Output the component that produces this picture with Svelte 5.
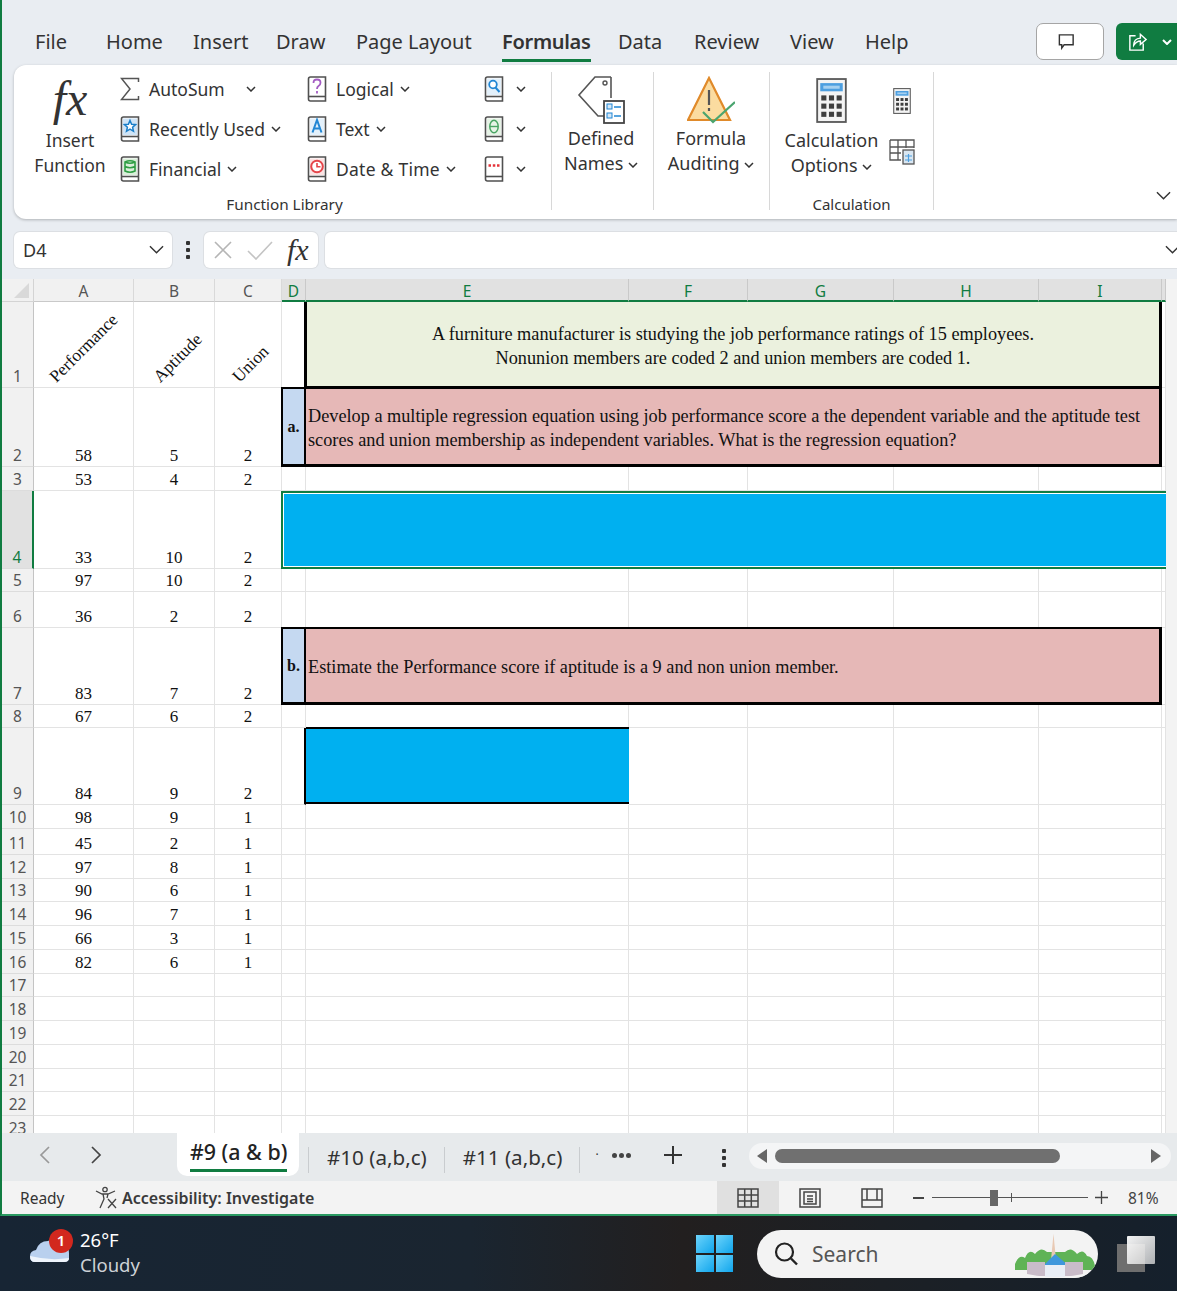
<script>
  const tabs = [
    { name: "File", width: 71 }, { name: "Home", width: 87 }, { name: "Insert", width: 83 },
    { name: "Draw", width: 80 }, { name: "Page Layout", width: 146 }, { name: "Formulas", width: 116 },
    { name: "Data", width: 76 }, { name: "Review", width: 96 }, { name: "View", width: 75 }, { name: "Help", width: 60 }
  ];
  const columns = ["A", "B", "C", "D", "E", "F", "G", "H", "I", ""];
  const rowHeights = [23, 86, 79, 24, 78, 23, 36, 77, 23, 77, 24, 26, 24, 23, 24, 24, 24, 23, 24, 24, 24, 23, 24, 24];
  const values = {
    2: [58, 5, 2], 3: [53, 4, 2], 4: [33, 10, 2], 5: [97, 10, 2], 6: [36, 2, 2],
    7: [83, 7, 2], 8: [67, 6, 2], 9: [84, 9, 2], 10: [98, 9, 1], 11: [45, 2, 1],
    12: [97, 8, 1], 13: [90, 6, 1], 14: [96, 7, 1], 15: [66, 3, 1], 16: [82, 6, 1]
  };
  const rows = Array.from({ length: 23 }, (_, i) => i + 1);
  const gridRows = rowHeights.map((h) => h + "px").join(" ");
</script>

{#snippet chevron()}
  <svg class="chev" viewBox="0 0 10 6"><path d="M1 1l4 4 4-4" /></svg>
{/snippet}

{#snippet book(kind)}
  <svg class="book" viewBox="0 0 20 26">
    <path d="M1.5 3Q1.5 1 3.5 1H18.5V25H3.5Q1.5 25 1.5 23Z" fill="#fff" stroke="#505050" stroke-width="1.6" />
    <path d="M1.5 20.5H18.5" stroke="#505050" stroke-width="1.6" />
    {#if kind === "star"}
      <rect x="3" y="2.500" width="14" height="16.500" fill="#cfe4f6" />
      <path d="M10 4.500l1.600 3.800 4 .3-3 2.700.9 4-3.500-2.100-3.500 2.100.9-4-3-2.700 4-.3z" fill="#fff" stroke="#1b7fc9" stroke-width="1.500" />
    {:else if kind === "db"}
      <rect x="3" y="2.500" width="14" height="16.500" fill="#d9eed9" />
      <path d="M5 6q5-2.500 10 0v9q-5 2.500-10 0zM5 6q5 2.500 10 0M5 10.500q5 2.500 10 0" fill="none" stroke="#2f9e44" stroke-width="1.600" />
    {:else if kind === "q"}
      <path d="M6.500 7q0-3.500 3.500-3.500t3.500 3.200q0 2-2 3.300-1.500 1-1.500 3M10 15v2.500" fill="none" stroke="#a45cc4" stroke-width="1.800" />
    {:else if kind === "a"}
      <rect x="3" y="2.500" width="14" height="16.500" fill="#e3f0fa" />
      <path d="M5.500 16.500L10 4l4.500 12.500M7 12.500h6" fill="none" stroke="#2186d4" stroke-width="2" />
    {:else if kind === "clock"}
      <rect x="3" y="2.500" width="14" height="16.500" fill="#fbe3e3" />
      <circle cx="10" cy="10.500" r="5.800" fill="#fff" stroke="#e5454a" stroke-width="2" />
      <path d="M10 7v3.800h3.500" fill="none" stroke="#e5454a" stroke-width="1.600" />
    {:else if kind === "find"}
      <rect x="3" y="2.500" width="14" height="16.500" fill="#e3f0fa" />
      <circle cx="9" cy="8.500" r="3.800" fill="#fff" stroke="#2186d4" stroke-width="1.800" />
      <path d="M11.500 11.500l4 4.500" stroke="#2186d4" stroke-width="2" />
    {:else if kind === "theta"}
      <rect x="3" y="2.500" width="14" height="16.500" fill="#e6f3e6" />
      <ellipse cx="10" cy="10.500" rx="4.200" ry="6.300" fill="none" stroke="#4aa564" stroke-width="1.500" />
      <path d="M6 10.500h8" stroke="#4aa564" stroke-width="1.400" />
    {:else}
      <path d="M4.500 9.500h2.500M8.800 9.500h2.500M13 9.500h2.500" stroke="#e5343a" stroke-width="2.400" />
    {/if}
  </svg>
{/snippet}

{#snippet calculator(cls)}
  <svg class={cls} viewBox="0 0 30 44">
    <rect x="1" y="1" width="28" height="42" fill="#f4f4f4" stroke="#5a5a5a" stroke-width="1.800" />
    <rect x="4" y="5" width="22" height="8" fill="#4d9fe0" />
    <rect x="7" y="7.500" width="16" height="3" fill="#a5d0f0" />
    {#each [17, 25, 33] as y}
      {#each [5, 12.500, 20] as x}
        <rect {x} {y} width="5" height="5" fill="#3f3f3f" />
      {/each}
    {/each}
  </svg>
{/snippet}

<div class="window">
  <header class="topbar">
    <nav class="tabs">
      {#each tabs as tab}
        <div class="tab" style="width: {tab.width}px"><span class:active={tab.name === "Formulas"}>{tab.name}</span></div>
      {/each}
    </nav>
    <button class="comment" aria-label="Comments">
      <svg viewBox="0 0 20 20" width="19" height="19"><path d="M2.500 3H17V13.500H7.500L5 17V13.500H2.500Z" fill="none" stroke="#333" stroke-width="1.500" /></svg>
    </button>
    <button class="share" aria-label="Share">
      <svg viewBox="0 0 22 22" width="21" height="21"><path d="M9 5H3V20H17V13M7 15Q7 8 14 7.500V3.500L20 9L14 14V10.500Q10 10.500 7 15Z" fill="none" stroke="#fff" stroke-width="1.500" /></svg>
      <svg class="chev white" viewBox="0 0 10 6"><path d="M1 1l4 4 4-4" /></svg>
    </button>
  </header>

  <section class="ribbon">
    <div class="group library">
      <div class="group-body">
        <div class="big insert">
          <span class="fx-big">fx</span>
          <span>Insert</span>
          <span>Function</span>
        </div>
        <div class="list col-one">
          <div class="item">
            <svg class="book" viewBox="0 0 20 24"><path d="M18.500 5V1.500H1.500L10 12 1.500 22.500H18.500V19" fill="none" stroke="#555" stroke-width="1.500" /></svg>
            <span class="auto-sum">AutoSum</span>{@render chevron()}
          </div>
          <div class="item">{@render book("star")}<span>Recently Used</span>{@render chevron()}</div>
          <div class="item">{@render book("db")}<span>Financial</span>{@render chevron()}</div>
        </div>
        <div class="list col-two">
          <div class="item">{@render book("q")}<span>Logical</span>{@render chevron()}</div>
          <div class="item">{@render book("a")}<span>Text</span>{@render chevron()}</div>
          <div class="item">{@render book("clock")}<span class="date">Date &amp; Time</span>{@render chevron()}</div>
        </div>
        <div class="list col-three">
          <div class="item">{@render book("find")}{@render chevron()}</div>
          <div class="item">{@render book("theta")}{@render chevron()}</div>
          <div class="item">{@render book("more")}{@render chevron()}</div>
        </div>
      </div>
      <div class="group-label library-label">Function Library</div>
    </div>

    <div class="group names">
      <div class="big short">
        <svg class="big-icon" viewBox="0 0 48 48" width="48" height="48">
          <path d="M34 1H18L2 19L21 40H30V31M34 1V22" fill="#fff" stroke="#555" stroke-width="1.600" />
          <circle cx="28" cy="7" r="2" fill="#fff" stroke="#555" stroke-width="1.400" />
          <rect x="27" y="25" width="20" height="22" fill="#fff" stroke="#444" stroke-width="1.800" />
          <rect x="30" y="28" width="5" height="5" fill="#d5e8f7" stroke="#2186d4" />
          <rect x="30" y="37" width="5" height="5" fill="#d5e8f7" stroke="#2186d4" />
          <path d="M37 31h7M37 40h7" stroke="#2186d4" stroke-width="1.600" />
        </svg>
        <span>Defined</span>
        <span>Names {@render chevron()}</span>
      </div>
    </div>

    <div class="group audit">
      <div class="big short">
        <svg class="big-icon" viewBox="0 0 48 48" width="48" height="48">
          <path d="M22 2L1 44H43Z" fill="#fbdca0" stroke="#e08a2a" stroke-width="2.200" />
          <path d="M22 14V29M22 32V35" stroke="#555" stroke-width="2.200" />
          <path d="M16 36L26 46L48 26" fill="none" stroke="#4aa56f" stroke-width="2.200" />
        </svg>
        <span>Formula</span>
        <span>Auditing {@render chevron()}</span>
      </div>
    </div>

    <div class="group calc">
      <div class="group-body">
        <div class="big calc-options">
          {@render calculator("calc-big")}
          <span>Calculation</span>
          <span>Options {@render chevron()}</span>
        </div>
        <div class="calc-side">
          {@render calculator("calc-small")}
          <svg viewBox="0 0 26 26" width="26" height="26">
            <path d="M1 1H25V9M1 1V21H12M1 8H25M1 14H12M9 1V21M17 1V9" fill="#fff" stroke="#555" stroke-width="1.300" />
            <rect x="14" y="11" width="11" height="14" fill="#d9e6f1" stroke="#555" stroke-width="1.300" />
            <path d="M16 17h7M16 21h7M19.500 15v8" stroke="#4d9fe0" stroke-width="1.200" />
          </svg>
        </div>
      </div>
      <div class="group-label">Calculation</div>
    </div>

    <svg class="collapse" viewBox="0 0 16 10"><path d="M1 1l7 7 7-7" /></svg>
  </section>

  <div class="formula-bar">
    <div class="name-box"><span>D4</span><svg class="fb-chev" viewBox="0 0 16 10"><path d="M1 1l7 7 7-7" /></svg></div>
    <div class="kebab bar-kebab"><i></i><i></i><i></i></div>
    <div class="fx-box">
      <svg viewBox="0 0 20 20" width="20" height="20"><path d="M2 2l16 16M18 2L2 18" stroke="#b5b5b5" stroke-width="1.600" /></svg>
      <svg viewBox="0 0 26 20" width="26" height="20"><path d="M1 11l8 8L25 2" fill="none" stroke="#c4c4c4" stroke-width="1.600" /></svg>
      <span class="fx-small">fx</span>
    </div>
    <div class="formula-input"><svg class="fb-chev" viewBox="0 0 16 10"><path d="M1 1l7 7 7-7" /></svg></div>
  </div>

  <div class="sheet" style="grid-template-rows: {gridRows}">
    <div class="corner"><span></span></div>
    {#each columns as col, i}
      <div class="col-head" class:selected={i >= 3}>{col}</div>
    {/each}

    {#each rows as n}
      <div class="row-head" class:selected={n === 4}>{n}</div>
      {#if n === 1}
        <div class="cell angled a-col"><span>Performance</span></div>
        <div class="cell angled b-col"><span>Aptitude</span></div>
        <div class="cell angled c-col"><span>Union</span></div>
        <div class="cell box-edge"></div>
        <div class="cell merged intro">
          <p>A furniture manufacturer is studying the job performance ratings of 15 employees.</p>
          <p>Nonunion members are coded 2 and union members are coded 1.</p>
        </div>
        <div class="cell"></div>
      {:else}
        {#each [0, 1, 2] as c}
          <div class="cell num">{values[n] ? values[n][c] : ""}</div>
        {/each}
        {#if n === 2}
          <div class="cell tag">a.</div>
          <div class="cell merged question">
            <p>Develop a multiple regression equation using job performance score a the dependent variable and the aptitude test</p>
            <p>scores and union membership as independent variables. What is the regression equation?</p>
          </div>
          <div class="cell"></div>
        {:else if n === 4}
          <div class="cell answer-row"></div>
        {:else if n === 7}
          <div class="cell tag">b.</div>
          <div class="cell merged question"><p>Estimate the Performance score if aptitude is a 9 and non union member.</p></div>
          <div class="cell"></div>
        {:else if n === 9}
          <div class="cell box-edge"></div>
          <div class="answer-box"></div>
          {#each [0, 1, 2, 3, 4] as _}<div class="cell"></div>{/each}
        {:else}
          {#each [0, 1, 2, 3, 4, 5, 6] as _}<div class="cell"></div>{/each}
        {/if}
      {/if}
    {/each}
  </div>

  <div class="sheet-tabs">
    <svg class="nav prev" viewBox="0 0 12 20"><path d="M10 2L2 10l8 8" /></svg>
    <svg class="nav next" viewBox="0 0 12 20"><path d="M2 2l8 8-8 8" /></svg>
    <div class="sheet-tab current"><span>#9 (a &amp; b)</span></div>
    <i class="sep"></i>
    <div class="sheet-tab">#10 (a,b,c)</div>
    <div class="sheet-tab">#11 (a,b,c)</div>
    <span class="cut">·</span>
    <div class="more"><i></i><i></i><i></i></div>
    <svg class="add" viewBox="0 0 20 20"><path d="M10 1v18M1 10h18" /></svg>
    <div class="kebab tab-kebab"><i></i><i></i><i></i></div>
    <div class="scroll">
      <svg viewBox="0 0 10 14" width="10" height="14"><path d="M10 0V14L0 7Z" fill="#666" /></svg>
      <div class="thumb"></div>
      <svg viewBox="0 0 10 14" width="10" height="14"><path d="M0 0V14L10 7Z" fill="#666" /></svg>
    </div>
  </div>

  <footer class="status">
    <span class="ready">Ready</span>
    <svg class="a11y" viewBox="0 0 24 24" width="24" height="24">
      <circle cx="11" cy="3.500" r="2.200" fill="none" stroke="#444" stroke-width="1.300" />
      <path d="M2 5L8 8H14L21 5M9 8L10 13 6 22M14 8L13 12M14 13L22 22M22 13L14 22" fill="none" stroke="#444" stroke-width="1.300" />
    </svg>
    <strong>Accessibility: Investigate</strong>
    <div class="view-btn on">
      <svg viewBox="0 0 22 20" width="22" height="20"><path d="M1 1H21V19H1ZM1 7H21M1 13H21M7.700 1V19M14.300 1V19" fill="none" stroke="#444" stroke-width="1.500" /></svg>
    </div>
    <div class="view-btn">
      <svg viewBox="0 0 22 20" width="22" height="20"><path d="M1 1H21V19H1ZM5 4H17V16H5ZM8 8H14M8 11H14M8 13.500H14" fill="none" stroke="#444" stroke-width="1.500" /></svg>
    </div>
    <div class="view-btn">
      <svg viewBox="0 0 22 20" width="22" height="20"><path d="M1 1H21V19H1ZM1 12H16V1M6 12V1M16 12H21" fill="none" stroke="#444" stroke-width="1.500" /></svg>
    </div>
    <span class="minus"></span>
    <div class="slider"><i class="tick"></i><i class="knob"></i></div>
    <svg class="plus" viewBox="0 0 12 12" width="13" height="13"><path d="M6 0v12M0 6h12" stroke="#444" stroke-width="1.200" /></svg>
    <span class="percent">81%</span>
  </footer>
</div>

<div class="taskbar">
  <div class="weather">
    <svg class="cloud" viewBox="0 0 40 28" width="40" height="28">
      <path d="M5 27Q0 27 0 21 0 16 6 15 9 6 18 6 25 1 32 6 39 9 39 18V23Q39 27 34 27Z" fill="#b9d0ee" />
      <path d="M0 21Q0 27 5 27H34Q39 27 39 23 20 26 0 21Z" fill="#eef4fb" />
    </svg>
    <span class="badge">1</span>
    <div class="weather-text"><span>26°F</span><span class="dim">Cloudy</span></div>
  </div>
  <div class="start">
    <i></i><i></i><i></i><i></i>
  </div>
  <div class="search">
    <svg viewBox="0 0 26 26" width="26" height="26"><circle cx="11.500" cy="11" r="8.500" fill="none" stroke="#222" stroke-width="2.200" /><path d="M18 17.500l6 6" stroke="#222" stroke-width="2.400" /></svg>
    <span>Search</span>
    <svg class="scene" viewBox="0 0 80 48" width="80" height="48">
      <path d="M0 34Q4 24 10 28 14 18 20 24 26 16 32 22H50Q56 16 62 24 68 18 72 26 78 26 80 36V40H0Z" fill="#5fb356" />
      <path d="M36 30L38.500 4 41 30Z" fill="#e8c9b4" />
      <path d="M28 36L40 24 54 36Z" fill="#3f97dc" />
      <rect x="12" y="32" width="18" height="14" fill="#c9bcc9" />
      <rect x="50" y="32" width="18" height="14" fill="#c9bcc9" />
      <rect x="30" y="35" width="20" height="13" fill="#e9eef6" />
      <path d="M4 42Q40 52 76 42V48H4Z" fill="#f3f3f3" />
    </svg>
  </div>
  <div class="task-view"><i class="back"></i><i class="front"></i></div>
</div>

<style>
  :global(body) {
    margin: 0;
    background: #e9edf2;
  }
  :global(#app) {
    width: 1177px;
    height: 1291px;
    overflow: hidden;
  }
  p {
    margin: 0;
  }
  button {
    padding: 0;
    cursor: pointer;
  }
  .window {
    height: 1216px;
    box-sizing: border-box;
    border-left: 2px solid #107c41;
    border-bottom: 2px solid #2a9a62;
    background: #e9edf2;
    display: flex;
    flex-direction: column;
    font-family: "Noto Sans", sans-serif;
    color: #333;
    overflow: hidden;
  }

  .topbar {
    height: 65px;
    flex: none;
    display: flex;
    align-items: flex-start;
  }
  .tabs {
    display: flex;
    padding: 27px 0 0 33px;
    font-size: 20px;
    line-height: 30px;
  }
  .tab {
    white-space: nowrap;
    flex: none;
  }
  .tab span {
    display: inline-block;
  }
  .tab .active {
    font-weight: 600;
    border-bottom: 3px solid #107c41;
    letter-spacing: -0.3px;
    height: 32px;
  }
  .comment {
    margin: 23px 0 0 auto;
    width: 68px;
    height: 37px;
    background: #fff;
    border: 1px solid #a5a5a5;
    border-radius: 7px;
    display: flex;
    align-items: center;
    justify-content: center;
    padding-right: 8px;
    box-sizing: border-box;
  }
  .share {
    margin: 23px 0 0 12px;
    width: 61px;
    height: 37px;
    flex: none;
    background: #107c41;
    border: 0;
    border-radius: 6px 0 0 6px;
    display: flex;
    align-items: center;
    gap: 14px;
    padding-left: 11px;
    box-sizing: border-box;
  }

  .ribbon {
    margin-left: 12px;
    height: 154px;
    flex: none;
    box-sizing: border-box;
    padding-top: 7px;
    background: #fff;
    border-radius: 12px 0 0 12px;
    box-shadow: 0 1px 3px rgba(0, 0, 0, 0.25);
    display: flex;
    align-items: flex-start;
    font-size: 18px;
    line-height: 25px;
  }
  .group {
    height: 138px;
    box-sizing: border-box;
    border-right: 1px solid #d8d8d8;
    display: flex;
    flex-direction: column;
    flex: none;
  }
  .group-body {
    flex: 1;
    display: flex;
  }
  .group-label {
    height: 12px;
    line-height: 12px;
    font-size: 15px;
    text-align: center;
  }
  .library-label {
    font-size: 15.300px;
    padding-left: 4px;
  }
  .library {
    width: 538px;
  }
  .names {
    width: 102px;
    padding-right: 3px;
  }
  .audit {
    width: 116px;
    padding-right: 1px;
  }
  .calc {
    width: 164px;
  }
  .big {
    display: flex;
    flex-direction: column;
    align-items: center;
    white-space: nowrap;
  }
  .insert {
    width: 70px;
    margin-left: 21px;
    font-size: 17.500px;
  }
  .fx-big {
    height: 56px;
    font: italic 48px/53px "Liberation Serif", serif;
    color: #333;
  }
  .short {
    height: 100%;
  }
  .big-icon {
    margin: 4px 0 2px;
    height: 48px;
    flex: none;
  }
  .list {
    display: flex;
    flex-direction: column;
    gap: 6px;
    font-size: 17.500px;
  }
  .col-one {
    width: 186px;
    margin-left: 15px;
  }
  .col-two {
    width: 178px;
    padding-left: 1px;
    box-sizing: border-box;
  }
  .item {
    height: 34px;
    display: flex;
    align-items: center;
    gap: 9px;
    white-space: nowrap;
  }
  .item > span + .chev {
    margin-left: -3px;
  }
  .auto-sum {
    margin-right: 15px;
  }
  .date {
    letter-spacing: 0.25px;
  }
  .book {
    width: 20px;
    height: 26px;
    flex: none;
  }
  .col-three .item {
    gap: 12px;
  }
  .chev {
    width: 10px;
    height: 6px;
    vertical-align: 2px;
  }
  .chev path {
    fill: none;
    stroke: #333;
    stroke-width: 1.500;
  }
  .chev.white path {
    stroke: #fff;
    stroke-width: 2;
  }
  .calc-options {
    width: 93px;
    margin-left: 15px;
  }
  .calc-big {
    width: 31px;
    height: 45px;
    margin: 6px 0 5px;
    flex: none;
  }
  .calc-side {
    display: flex;
    flex-direction: column;
    align-items: center;
    gap: 25px;
    width: 32px;
    margin: 16px 0 0 8px;
  }
  .calc-small {
    width: 18px;
    height: 26px;
  }
  .collapse {
    width: 15px;
    height: 10px;
    margin: 119px 6px 0 auto;
    align-self: flex-start;
  }
  .collapse path,
  .fb-chev path {
    fill: none;
    stroke: #333;
    stroke-width: 1.500;
  }

  .formula-bar {
    height: 36px;
    flex: none;
    margin: 13px 0 0 12px;
    display: flex;
    align-items: stretch;
    font-size: 18px;
  }
  .name-box,
  .fx-box,
  .formula-input {
    background: #fff;
    border-radius: 6px;
    box-shadow: 0 0 0 1px #dcdfe3;
    display: flex;
    align-items: center;
  }
  .name-box {
    width: 158px;
    box-sizing: border-box;
    padding: 0 8px 0 9px;
    justify-content: space-between;
  }
  .fb-chev {
    width: 15px;
    height: 10px;
  }
  .kebab {
    display: flex;
    flex-direction: column;
    justify-content: center;
    align-items: center;
    gap: 3px;
    width: 32px;
  }
  .kebab i {
    width: 4px;
    height: 4px;
    background: #333;
    border-radius: 1px;
  }
  .bar-kebab {
    width: 32px;
  }
  .fx-box {
    width: 114px;
    box-sizing: border-box;
    padding-left: 9px;
    gap: 14px;
  }
  .fx-small {
    font: italic 30px/32px "Liberation Serif", serif;
    color: #333;
  }
  .formula-input {
    flex: 1;
    margin: 0 -8px 0 7px;
    justify-content: flex-end;
    padding-right: 5px;
  }

  .sheet {
    margin-top: 11px;
    height: 854px;
    flex: none;
    display: grid;
    grid-template-columns: 32px 100px 81px 67px 24px 323px 119px 146px 145px 123px 4px;
    overflow: hidden;
    background: #fff;
    font: 17px/24px "Liberation Serif", serif;
    color: #111;
    box-shadow: 11px 0 0 #f3f3f3;
    width: 1164px;
  }
  .corner {
    background: #f1f1f1;
    border-right: 1px solid #d4d4d4;
    border-bottom: 1px solid #d4d4d4;
    display: flex;
    align-items: flex-end;
    justify-content: flex-end;
    padding: 0 4px 3px 0;
  }
  .corner span {
    width: 0;
    height: 0;
    border-left: 15px solid transparent;
    border-bottom: 15px solid #d9d9d9;
  }
  .col-head,
  .row-head {
    background: #f1f1f1;
    font: 15.500px/24px "Noto Sans", sans-serif;
    color: #555;
    box-sizing: border-box;
    border-right: 1px solid #d9d9d9;
    border-bottom: 1px solid #c9c9c9;
  }
  .col-head {
    text-align: center;
    line-height: 25px;
  }
  .col-head.selected {
    background: #e1e1e1;
    color: #107c41;
    border-bottom: 2px solid #107c41;
    border-right-color: #c9c9c9;
  }
  .row-head {
    display: flex;
    align-items: flex-end;
    justify-content: center;
    line-height: 22px;
    border-bottom-color: #dcdcdc;
    border-right-color: #c4c4c4;
  }
  .row-head.selected {
    background: #e1e1e1;
    color: #107c41;
    border-right: 2px solid #107c41;
  }
  .cell {
    box-sizing: border-box;
    border-right: 1px solid #e3e3e3;
    border-bottom: 1px solid #e3e3e3;
    min-width: 0;
  }
  .num {
    display: flex;
    align-items: flex-end;
    justify-content: center;
    line-height: 21px;
  }
  .angled {
    display: flex;
    align-items: flex-end;
    padding-bottom: 1px;
  }
  .angled span {
    display: block;
    white-space: nowrap;
    transform-origin: 0 100%;
    transform: rotate(-45deg);
    line-height: 18px;
    font-size: 17.300px;
  }
  .a-col {
    padding-left: 25px;
  }
  .b-col {
    padding-left: 29px;
  }
  .c-col {
    padding-left: 27px;
  }
  .box-edge {
    border-right: 2px solid #000;
  }
  .merged {
    grid-column: span 5;
    border-right: 3px solid #000;
    display: flex;
    flex-direction: column;
    justify-content: center;
    font-size: 18.250px;
    padding-top: 3px;
  }
  .intro {
    background: #ebf1de;
    text-align: center;
    border-bottom: 2px solid #000;
    border-left: 1px solid #000;
  }
  .question {
    background: #e6b8b7;
    padding-left: 2px;
    margin-top: -1px;
    border-top: 2px solid #000;
    border-bottom: 3px solid #000;
  }
  .tag {
    background: #c5d9f1;
    margin: -1px 0 0 -1px;
    border: 2.500px solid #000;
    border-bottom-width: 3px;
    font-weight: 700;
    font-size: 16px;
    display: flex;
    align-items: center;
    justify-content: center;
  }
  .answer-row {
    grid-column: span 7;
    margin-left: -1px;
    background: #00b0f0;
    border: 2px solid #107c41;
    border-right: 0;
    box-shadow: inset 0 1px 0 #fff, inset 1px 0 0 #fff, inset 0 -1px 0 #fff;
  }
  .answer-box {
    margin: -1px 0 1px;
    background: #00b0f0;
    box-sizing: border-box;
    border-top: 2px solid #000;
    border-bottom: 2px solid #000;
  }

  .sheet-tabs {
    height: 48px;
    flex: none;
    display: flex;
    align-items: flex-start;
    background: #e7eaec;
    font-size: 20.600px;
  }
  .nav {
    width: 12px;
    height: 20px;
    margin-top: 12px;
    flex: none;
  }
  .nav path {
    fill: none;
    stroke-width: 1.700;
  }
  .prev {
    margin-left: 37px;
  }
  .prev path {
    stroke: #999;
  }
  .next {
    margin-left: 39px;
  }
  .next path {
    stroke: #444;
  }
  .sheet-tab {
    height: 48px;
    line-height: 48px;
    box-sizing: border-box;
    padding: 0 18px;
    white-space: nowrap;
    flex: none;
    background: linear-gradient(#c9cccf, #c9cccf) right 14px / 1px 26px no-repeat;
  }
  .sheet-tab.current {
    margin-left: 75px;
    width: 122px;
    height: 43px;
    padding: 0 13px;
    background: #fff;
    border-radius: 0 0 10px 10px;
    color: #222;
    font-size: 21.400px;
    font-weight: 500;
    line-height: 38px;
  }
  .sheet-tab.current span {
    display: inline-block;
    height: 36px;
    border-bottom: 3px solid #107c41;
  }
  .sep {
    width: 1px;
    height: 26px;
    margin: 14px 0 0 9px;
    background: #c9cccf;
    flex: none;
  }
  .cut {
    width: 2px;
    margin-left: 15px;
    font-size: 12px;
    line-height: 44px;
    flex: none;
  }
  .more {
    display: flex;
    gap: 2px;
    margin: 20px 0 0 15px;
    flex: none;
  }
  .more i {
    width: 5px;
    height: 5px;
    border-radius: 50%;
    background: #444;
  }
  .add {
    width: 20px;
    height: 20px;
    margin: 12px 0 0 32px;
    flex: none;
  }
  .add path {
    stroke: #333;
    stroke-width: 2;
    fill: none;
  }
  .tab-kebab {
    width: 4px;
    margin: 16px 0 0 39px;
    gap: 3px;
    flex: none;
  }
  .scroll {
    margin: 10px 0 0 23px;
    width: 422px;
    height: 26px;
    flex: none;
    box-sizing: border-box;
    padding: 0 10px 0 8px;
    background: #f4f5f6;
    border-radius: 13px;
    display: flex;
    align-items: center;
    justify-content: space-between;
  }
  .thumb {
    width: 285px;
    height: 14px;
    margin: 0 auto 0 8px;
    background: #707070;
    border-radius: 7px;
  }

  .status {
    flex: 1;
    display: flex;
    align-items: center;
    background: #f3f3f3;
    font-size: 15.500px;
    white-space: nowrap;
  }
  .ready {
    margin-left: 18px;
    width: 74px;
  }
  .a11y {
    flex: none;
  }
  .status strong {
    font-weight: 600;
    width: 595px;
    flex: none;
    margin-left: 4px;
    font-size: 16px;
    color: #3a3a3a;
  }
  .view-btn {
    width: 62px;
    align-self: stretch;
    display: flex;
    align-items: center;
    justify-content: center;
    flex: none;
  }
  .view-btn.on {
    background: #e0e0e0;
  }
  .minus {
    width: 11px;
    height: 2px;
    background: #444;
    margin-left: 10px;
    flex: none;
  }
  .slider {
    width: 156px;
    height: 1px;
    margin-left: 8px;
    background: #555;
    display: flex;
    align-items: center;
    padding-left: 58px;
    box-sizing: border-box;
    flex: none;
  }
  .knob {
    width: 8px;
    height: 16px;
    background: #666;
    flex: none;
  }
  .tick {
    order: 1;
    width: 1px;
    height: 9px;
    background: #555;
    margin-left: 13px;
    flex: none;
  }
  .plus {
    margin-left: 7px;
    flex: none;
  }
  .percent {
    margin-left: 20px;
    font-size: 15.500px;
    color: #444;
  }

  .taskbar {
    height: 75px;
    background: linear-gradient(90deg, #172534 0%, #1a2530 40%, #221f1f 58%, #1c2025 75%, #15202c 100%);
    display: flex;
    align-items: center;
    font-family: "Noto Sans", sans-serif;
    color: #fff;
  }
  .weather {
    position: relative;
    display: flex;
    align-items: center;
    margin-left: 30px;
    width: 666px;
  }
  .cloud {
    margin-top: -10px;
  }
  .badge {
    position: absolute;
    left: 19px;
    top: -2px;
    width: 24px;
    height: 24px;
    border-radius: 50%;
    background: #d2281e;
    font-size: 15px;
    font-weight: 600;
    line-height: 23px;
    text-align: center;
  }
  .weather-text {
    display: flex;
    flex-direction: column;
    margin: -4px 0 0 10px;
    font-size: 18.500px;
    line-height: 25px;
  }
  .dim {
    color: #cdd2d6;
  }
  .start {
    width: 37px;
    height: 37px;
    display: grid;
    grid-template-columns: 1fr 1fr;
    gap: 2px;
    flex: none;
  }
  .start i {
    background: linear-gradient(135deg, #6dd4fb, #10a5ec);
  }
  .search {
    margin-left: 24px;
    width: 341px;
    height: 48px;
    flex: none;
    box-sizing: border-box;
    padding-left: 16px;
    background: #f3f3f3;
    border-radius: 24px;
    display: flex;
    align-items: center;
    color: #555;
    font-size: 21px;
    overflow: hidden;
  }
  .search span {
    margin-left: 13px;
    width: 203px;
    flex: none;
  }
  .scene {
    margin-top: 1px;
    flex: none;
  }
  .task-view {
    position: relative;
    margin-left: 19px;
    width: 38px;
    height: 36px;
    flex: none;
  }
  .task-view i {
    position: absolute;
    width: 28px;
    height: 28px;
  }
  .task-view .back {
    left: 0;
    bottom: 0;
    background: #6e6e6e;
  }
  .task-view .front {
    right: 0;
    top: 0;
    background: linear-gradient(135deg, rgba(255, 255, 255, 0.95), rgba(225, 225, 225, 0.75));
    border-radius: 1px;
  }
</style>
